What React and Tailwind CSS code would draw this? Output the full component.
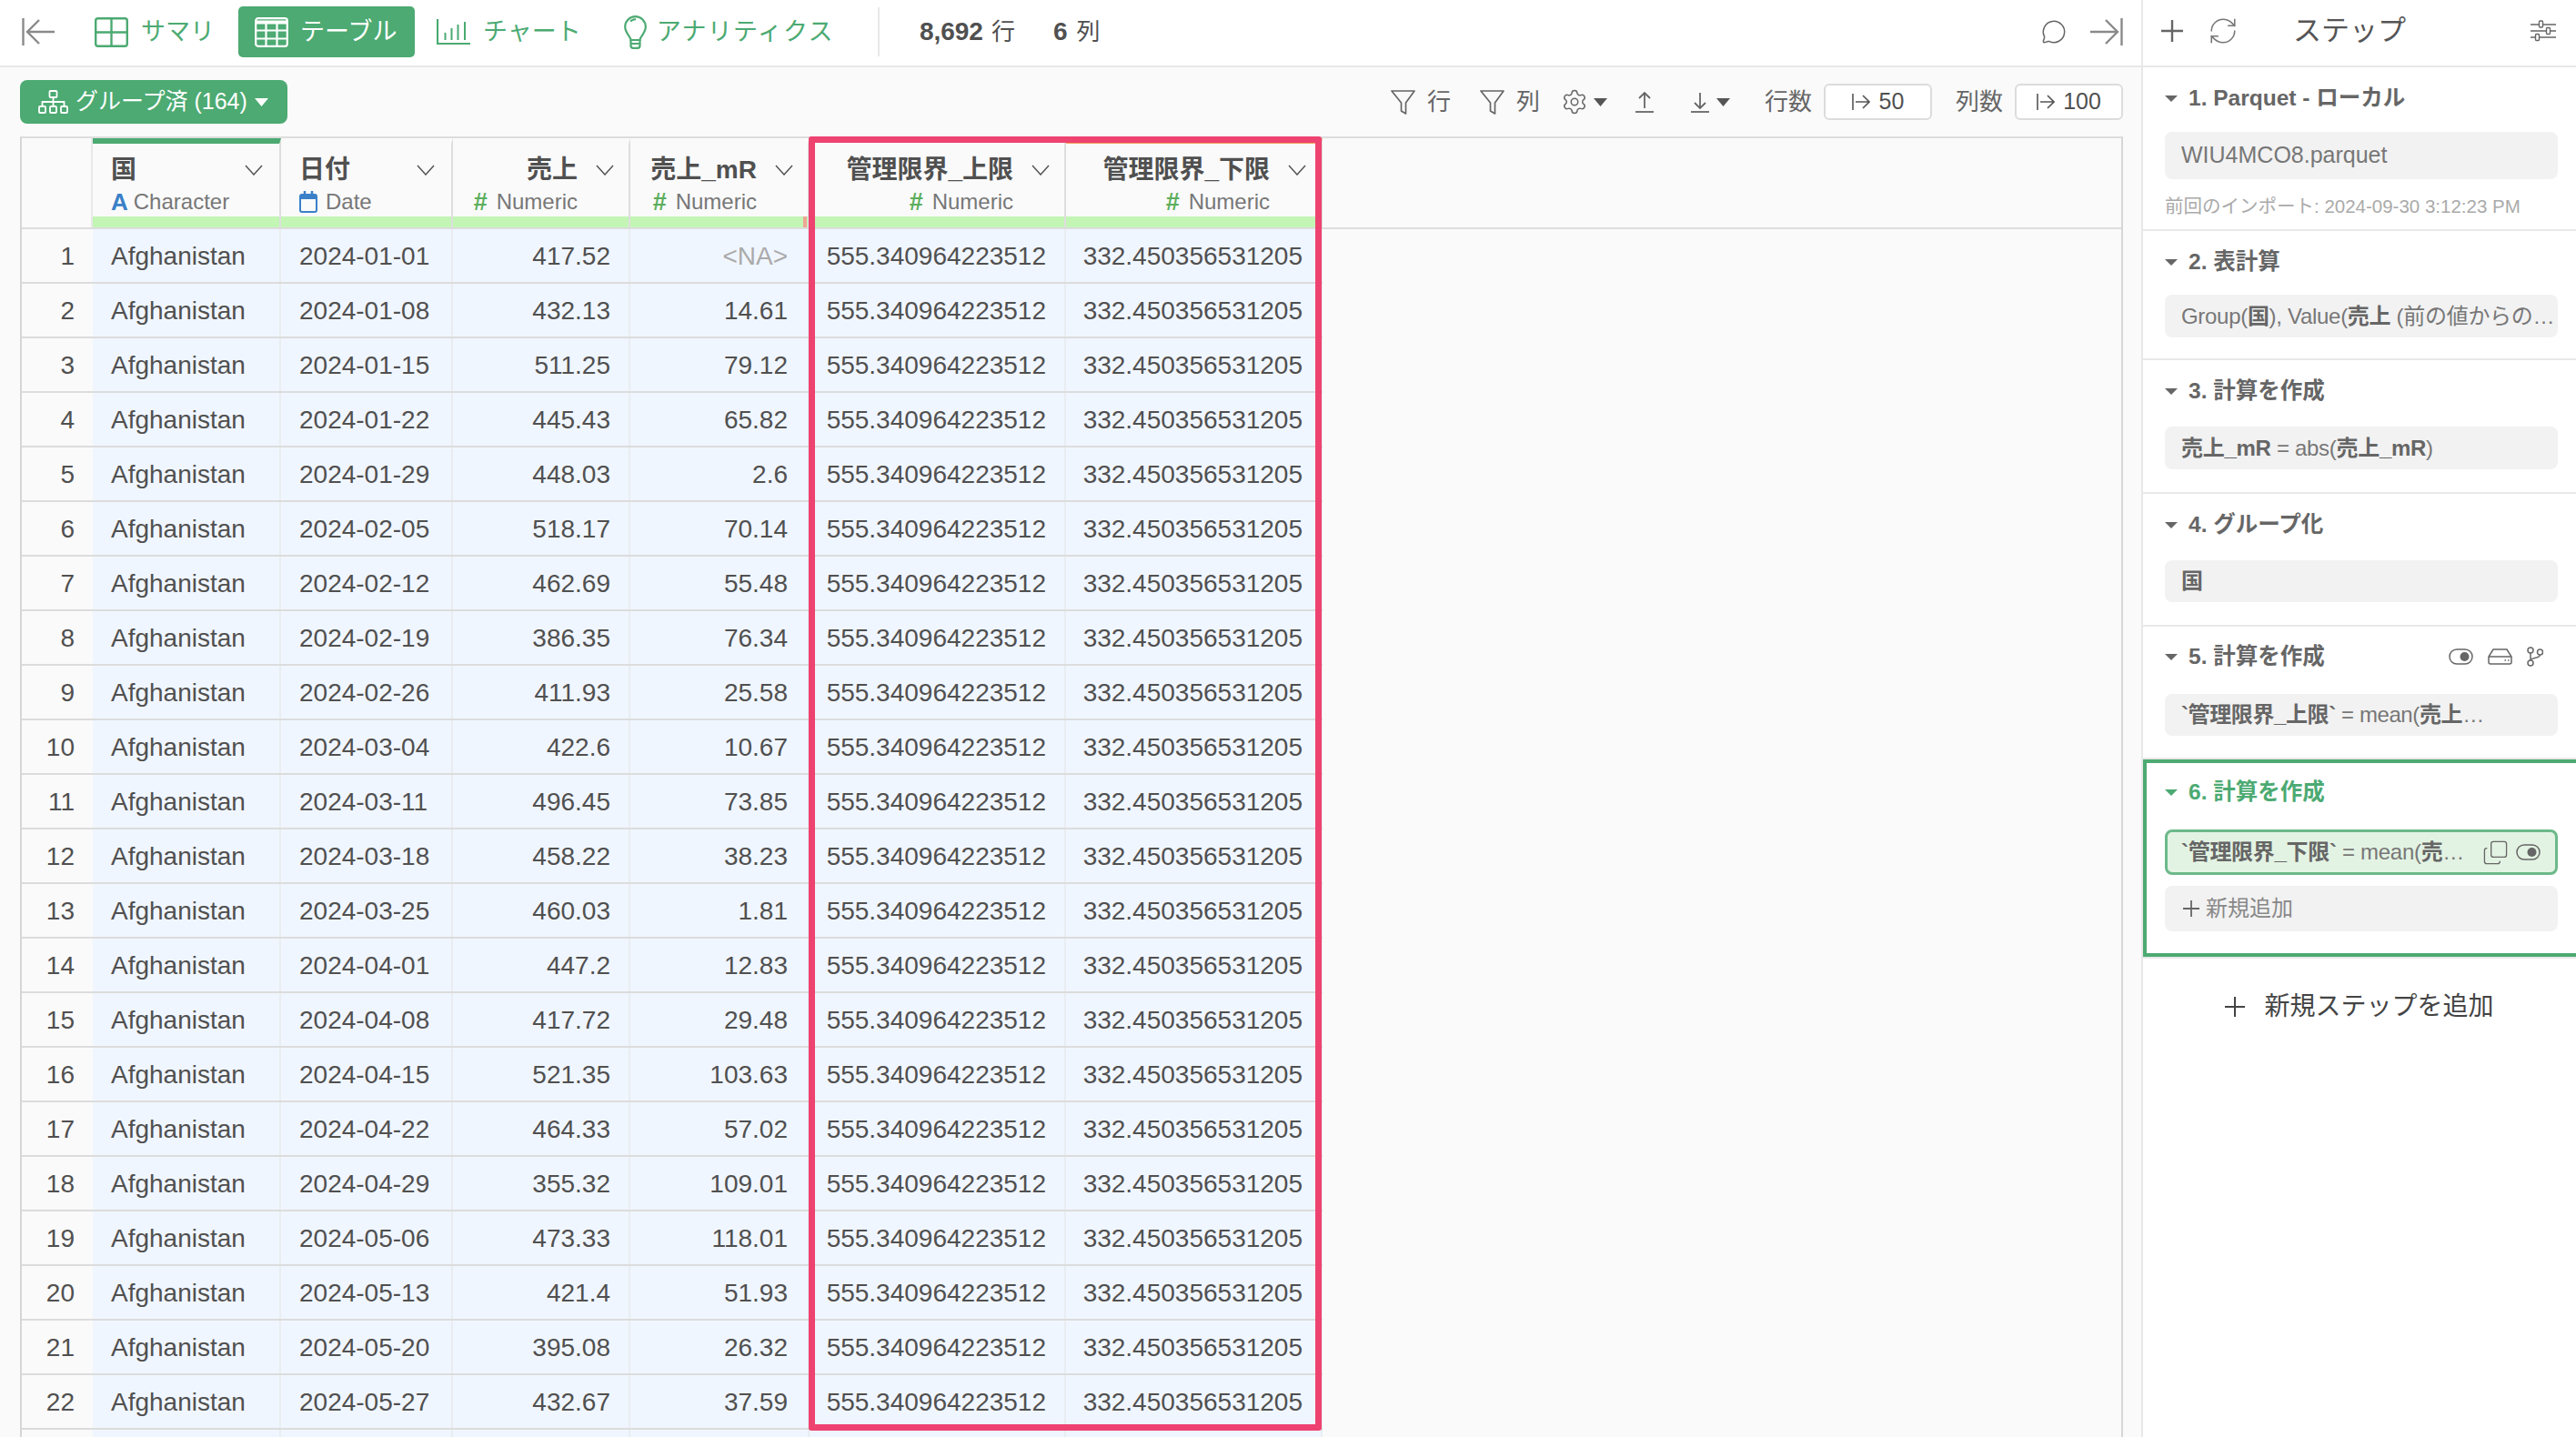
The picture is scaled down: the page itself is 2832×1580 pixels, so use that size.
import { Settings, MessageCircle, RefreshCw, Copy } from 'lucide-react';

const COLS = 'grid grid-cols-[78px_207px_189px_195px_197px_282px_282px] w-[1430px]';

const rows = [
  ['2024-01-01', '417.52', '<NA>'],
  ['2024-01-08', '432.13', '14.61'],
  ['2024-01-15', '511.25', '79.12'],
  ['2024-01-22', '445.43', '65.82'],
  ['2024-01-29', '448.03', '2.6'],
  ['2024-02-05', '518.17', '70.14'],
  ['2024-02-12', '462.69', '55.48'],
  ['2024-02-19', '386.35', '76.34'],
  ['2024-02-26', '411.93', '25.58'],
  ['2024-03-04', '422.6', '10.67'],
  ['2024-03-11', '496.45', '73.85'],
  ['2024-03-18', '458.22', '38.23'],
  ['2024-03-25', '460.03', '1.81'],
  ['2024-04-01', '447.2', '12.83'],
  ['2024-04-08', '417.72', '29.48'],
  ['2024-04-15', '521.35', '103.63'],
  ['2024-04-22', '464.33', '57.02'],
  ['2024-04-29', '355.32', '109.01'],
  ['2024-05-06', '473.33', '118.01'],
  ['2024-05-13', '421.4', '51.93'],
  ['2024-05-20', '395.08', '26.32'],
  ['2024-05-27', '432.67', '37.59'],
];

function EdgeArrow({ className }) {
  return (
    <svg width="36" height="30" viewBox="0 0 36 30" fill="none" stroke="#8a8a8a" strokeWidth="2.4" className={className}>
      <path d="M1.5 0v30" />
      <path d="M6 15h30M19 2 6 15l13 13" />
    </svg>
  );
}

function SummaryIcon() {
  return (
    <svg width="37" height="33" viewBox="0 0 37 33" fill="none" stroke="#4caa72" strokeWidth="2.4">
      <rect x="1.2" y="1.2" width="34.6" height="30.6" rx="2.5" />
      <path d="M18.5 1v31M1 16.5h35" />
    </svg>
  );
}

function TableIcon() {
  return (
    <svg width="37" height="33" viewBox="0 0 37 33" fill="none" stroke="#fff" strokeWidth="2.2">
      <rect x="1.2" y="1.2" width="34.6" height="30.6" rx="2.5" />
      <path d="M1 5.5h35" strokeWidth="4" />
      <path d="M12.5 5v27M24.5 5v27M1 14.5h35M1 23.5h35" />
    </svg>
  );
}

function ChartIcon() {
  return (
    <svg width="37" height="28" viewBox="0 0 37 28" fill="none" stroke="#4caa72">
      <path d="M1 0v27h36" strokeWidth="2.2" />
      <path d="M9.5 23v-8M16.5 23V10M23.5 23V6M31 23V3" strokeWidth="2" />
    </svg>
  );
}

function BulbIcon() {
  return (
    <svg width="25" height="37" viewBox="0 0 25 37" fill="none" stroke="#4caa72" strokeWidth="2.2">
      <path d="M7.5 27c0-4-6.3-7.500-6.300-14.500a11.300 11.300 0 0 1 22.600 0C23.800 19.500 17.500 23 17.500 27z" />
      <path d="M7 6.500c1.500-1.500 3.500-2.300 6-2.300" />
      <path d="M7.500 27v6c0 1.500 1 2.800 2.500 2.800h5c1.500 0 2.500-1.300 2.500-2.800v-6M7.500 31h10" />
    </svg>
  );
}

function OrgIcon() {
  return (
    <svg width="33" height="26" viewBox="0 0 33 26" fill="none" stroke="#fff" strokeWidth="1.8">
      <rect x="12.500" y="1" width="8" height="7" rx="1" />
      <path d="M16.500 8v5M4.500 18v-5h24v5M16.500 13v5" />
      <rect x="1" y="18" width="7" height="7" rx="1" />
      <rect x="13" y="18" width="7" height="7" rx="1" />
      <rect x="25" y="18" width="7" height="7" rx="1" />
    </svg>
  );
}

function Caret({ color = '#555', w = 15, h = 9 }) {
  return (
    <svg width={w} height={h} viewBox="0 0 15 9" preserveAspectRatio="none" className="shrink-0">
      <path d="M0 0h15L7.500 9z" fill={color} />
    </svg>
  );
}

function FilterIcon() {
  return (
    <svg width="27" height="27" viewBox="0 0 27 27" fill="none" stroke="#666" strokeWidth="1.7" strokeLinejoin="round" className="shrink-0">
      <path d="M1 1h25L16.500 14v12l-5-3V14z" />
    </svg>
  );
}

function UnderArrow({ down }) {
  return (
    <svg width="20" height="23" viewBox="0 0 20 23" fill="none" stroke="#666" strokeWidth="1.8" className="shrink-0">
      <path d={down ? 'M10 1v17M4 12l6 6 6-6' : 'M10 18V1M4 7l6-6 6 6'} />
      <path d="M0 22h20" />
    </svg>
  );
}

function LimitIcon() {
  return (
    <svg width="20" height="20" viewBox="0 0 20 20" fill="none" stroke="#555" strokeWidth="1.6" className="shrink-0">
      <path d="M1 1v18M4 10h15M12 3l7 7-7 7" />
    </svg>
  );
}

function Chevron() {
  return (
    <svg width="20" height="12" viewBox="0 0 20 12" fill="none" stroke="#555" strokeWidth="1.5" className="shrink-0">
      <path d="M1 1l9 10 9-10" />
    </svg>
  );
}

function ToggleIcon() {
  return (
    <svg width="27" height="18" viewBox="0 0 27 18" fill="none" className="shrink-0">
      <rect x="1" y="1" width="25" height="16" rx="8" stroke="#666" strokeWidth="1.5" />
      <circle cx="17.500" cy="9" r="5" fill="#666" />
    </svg>
  );
}

function DriveIcon() {
  return (
    <svg width="27" height="18" viewBox="0 0 27 18" fill="none" stroke="#666" strokeWidth="1.5" className="shrink-0">
      <path d="M6 1h15l5 8v6a2 2 0 0 1-2 2H3a2 2 0 0 1-2-2V9zM1 9h25" />
      <path d="M18.500 13h1.500M22 13h1.500" />
    </svg>
  );
}

function BranchIcon() {
  return (
    <svg width="18" height="22" viewBox="0 0 18 22" fill="none" stroke="#666" strokeWidth="1.5" className="shrink-0">
      <circle cx="4" cy="4" r="3" />
      <circle cx="4" cy="18" r="3" />
      <circle cx="14.500" cy="6" r="3" />
      <path d="M4 7v8M14.500 9c0 4-10.500 3-10.500 6" />
    </svg>
  );
}

function SlidersIcon() {
  return (
    <svg width="28" height="24" viewBox="0 0 28 24" fill="none" stroke="#666" strokeWidth="1.4" className="shrink-0">
      <path d="M0 5h9M14 5h14M0 12h17M22 12h6M0 19h5M10 19h18" />
      <rect x="9.500" y="1" width="4" height="7" rx="1" />
      <rect x="17.500" y="8.500" width="4" height="7" rx="1" />
      <rect x="5.500" y="15.500" width="4" height="7" rx="1" />
    </svg>
  );
}

function PlusIcon({ size, color = '#666', width = 2.4 }) {
  return (
    <svg width={size} height={size} viewBox="0 0 24 24" fill="none" stroke={color} strokeWidth={width} className="shrink-0">
      <path d="M12 0v24M0 12h24" />
    </svg>
  );
}

function HeaderCell({ name, type, icon, numeric, topBar = 'border-t-transparent', naMark }) {
  return (
    <div className={`flex flex-col h-[98px] border-t-[6px] border-r-2 border-r-[#dedede] bg-[#fafafa] ${topBar}`}>
      <div className="flex-1">
        <div className={`flex items-center h-[28px] mt-[15px] ${numeric ? 'justify-end pr-[16px]' : 'pl-[20px] pr-[18px] justify-between'}`}>
          <span className="text-[28px] font-semibold text-[#505050] whitespace-nowrap">{name}</span>
          <span className={numeric ? 'ml-[20px]' : ''}><Chevron /></span>
        </div>
        <div className={`flex items-center h-[26px] mt-[8px] ${numeric ? 'justify-end pr-[56px]' : 'pl-[20px]'}`}>
          {icon}
          <span className="text-[24px] text-[#777] whitespace-nowrap">{type}</span>
        </div>
      </div>
      <div className="flex h-[12px] bg-[#c3f5b5] justify-end">
        {naMark && <div className="w-[4px] mr-[1px] bg-[#f0a596]" />}
      </div>
    </div>
  );
}

const hashIcon = <span className="w-[19px] mr-[8px] text-center text-[27px] leading-[26px] font-bold text-[#5cae5c]">#</span>;

function Cell({ children, right, muted, pad = 'pr-[20px]' }) {
  return (
    <div className={`flex items-center pt-[2px] border-r-2 border-r-[#e9edf1] bg-[#f0f6ff] text-[28px] whitespace-nowrap ${right ? `justify-end ${pad}` : 'pl-[20px]'} ${muted ? 'text-[#aaa]' : 'text-[#505050]'}`}>
      {children}
    </div>
  );
}

function DataRow({ index, row }) {
  return (
    <div className={`${COLS} h-[60px] border-b-2 border-b-[#dcdcdc]`}>
      <div className="flex items-center justify-end pt-[2px] pr-[20px] bg-[#fafafa] text-[28px] text-[#505050]">{index}</div>
      <Cell>Afghanistan</Cell>
      <Cell>{row[0]}</Cell>
      <Cell right>{row[1]}</Cell>
      <Cell right pad="pr-[22px]" muted={row[2] === '<NA>'}>{row[2]}</Cell>
      <Cell right>555.340964223512</Cell>
      <Cell right>332.450356531205</Cell>
    </div>
  );
}

function StepTitle({ label, green, children }) {
  return (
    <div className="flex items-center h-[28px]">
      <Caret color={green ? '#4caa72' : '#666'} w={14} h={7} />
      <span className={`ml-[12px] text-[24.5px] font-bold whitespace-nowrap ${green ? 'text-[#4caa72]' : 'text-[#666]'}`}>{label}</span>
      {children}
    </div>
  );
}

function Field({ className, children }) {
  return (
    <div className={`flex items-center pl-[18px] rounded-[8px] bg-[#f2f2f2] text-[24px] text-[#777] whitespace-nowrap overflow-hidden ${className}`}>
      {children}
    </div>
  );
}

const B = ({ children }) => <span className="font-semibold text-[#666]">{children}</span>;

export default function App() {
  return (
    <div className="flex w-[2832px] h-[1580px] overflow-hidden bg-white font-['Liberation_Sans','Noto_Sans_CJK_JP',sans-serif]">
      <div className="flex flex-col w-[2354px] shrink-0">
        {/* top bar */}
        <div className="flex items-center h-[74px] pb-[6px] pt-[4px] border-b-2 border-b-[#e8e8e8] text-[27px] text-[#4caa72] whitespace-nowrap">
          <EdgeArrow className="ml-[24px] shrink-0" />
          <span className="ml-[44px]"><SummaryIcon /></span>
          <span className="ml-[14px]">サマリ</span>
          <div className="flex items-center ml-[26px] w-[194px] h-[56px] pl-[18px] rounded-[5px] bg-[#4caa72] text-white">
            <TableIcon />
            <span className="ml-[13px]">テーブル</span>
          </div>
          <span className="ml-[24px]"><ChartIcon /></span>
          <span className="ml-[14px]">チャート</span>
          <span className="ml-[47px]"><BulbIcon /></span>
          <span className="ml-[11px] tracking-[1.3px]">アナリティクス</span>
          <div className="ml-[48px] w-[2px] h-[54px] bg-[#e8e8e8]" />
          <span className="ml-[44px] text-[28px] font-bold text-[#505050]">8,692</span>
          <span className="ml-[9px] text-[26px] text-[#505050]">行</span>
          <span className="ml-[42px] text-[28px] font-bold text-[#505050]">6</span>
          <span className="ml-[10px] text-[26px] text-[#505050]">列</span>
          <MessageCircle size={28} strokeWidth={1.3} color="#666" className="ml-auto" />
          <EdgeArrow className="ml-[26px] mr-[20px] shrink-0 -scale-x-100" />
        </div>

        <div className="flex flex-col flex-1 min-h-0 bg-[#fafafa]">
          {/* toolbar */}
          <div className="flex items-center h-[48px] mt-[14px] ml-[22px] mr-[20px] text-[26px] text-[#666] whitespace-nowrap">
            <div className="flex items-center w-[294px] h-[48px] pl-[20px] rounded-[8px] bg-[#4caa72] text-white">
              <OrgIcon />
              <span className="ml-[8px] text-[25px]">グループ済 (164)</span>
              <span className="ml-[8px]"><Caret color="#fff" w={15} h={9} /></span>
            </div>
            <span className="ml-auto"><FilterIcon /></span>
            <span className="ml-[13px]">行</span>
            <span className="ml-[32px]"><FilterIcon /></span>
            <span className="ml-[13px]">列</span>
            <Settings size={30} strokeWidth={1.2} color="#666" className="ml-[23px]" />
            <span className="ml-[6px]"><Caret /></span>
            <span className="ml-[31px]"><UnderArrow /></span>
            <span className="ml-[41px]"><UnderArrow down /></span>
            <span className="ml-[8px]"><Caret /></span>
            <span className="ml-[38px]">行数</span>
            <div className="flex items-center justify-center gap-[10px] ml-[13px] w-[119px] h-[40px] border-2 border-[#dcdcdc] rounded-[6px] bg-white text-[25px] text-[#505050]">
              <LimitIcon />
              <span>50</span>
            </div>
            <span className="ml-[26px]">列数</span>
            <div className="flex items-center justify-center gap-[9px] ml-[13px] w-[119px] h-[40px] border-2 border-[#dcdcdc] rounded-[6px] bg-white text-[25px] text-[#505050]">
              <LimitIcon />
              <span>100</span>
            </div>
          </div>

          {/* table */}
          <div className="relative flex-1 min-h-0 mt-[14px] ml-[22px] mr-[20px] border-t-2 border-t-[#dddddd] border-l-2 border-l-[#d6d6d6] border-r-2 border-r-[#d6d6d6]">
            <div className="border-b-2 border-b-[#dddddd]">
              <div className={COLS}>
                <div className="border-r-2 border-r-[#e8e8e8] bg-[#fafafa]" />
                <HeaderCell
                  name="国"
                  type="Character"
                  topBar="border-t-[#4caa72]"
                  icon={<span className="mr-[6px] text-[26px] leading-[26px] font-bold text-[#3a80c8]">A</span>}
                />
                <HeaderCell
                  name="日付"
                  type="Date"
                  icon={
                    <svg width="20" height="24" viewBox="0 0 20 24" fill="none" className="mr-[9px] shrink-0">
                      <rect x="1" y="4" width="18" height="19" rx="2" stroke="#3a80c8" strokeWidth="2" />
                      <path d="M1 6a2 2 0 0 1 2-2h14a2 2 0 0 1 2 2v3H1z" fill="#3a80c8" />
                      <path d="M6 0v4M14 0v4" stroke="#3a80c8" strokeWidth="2.500" />
                    </svg>
                  }
                />
                <HeaderCell name="売上" type="Numeric" numeric icon={hashIcon} />
                <HeaderCell name="売上_mR" type="Numeric" numeric icon={hashIcon} naMark />
                <HeaderCell name="管理限界_上限" type="Numeric" numeric icon={hashIcon} />
                <HeaderCell name="管理限界_下限" type="Numeric" numeric icon={hashIcon} topBar="border-t-[#f2a35c]" />
              </div>
            </div>
            {rows.map((row, i) => (
              <DataRow key={row[0]} index={i + 1} row={row} />
            ))}
            <div className={`${COLS} h-[60px]`}>
              <div className="bg-[#fafafa]" />
              <Cell />
              <Cell />
              <Cell />
              <Cell />
              <Cell />
              <Cell />
            </div>
            {/* highlight over the two new columns */}
            <div className="absolute left-[865px] top-[-2px] w-[564px] h-[1423px] border-[7px] border-[#ee4270] rounded-[3px]" />
          </div>
        </div>
      </div>

      {/* steps panel */}
      <div className="flex flex-col w-[478px] shrink-0 border-l-2 border-l-[#e8e8e8]">
        <div className="flex items-center h-[74px] pb-[4px] pl-[20px] border-b-2 border-b-[#e8e8e8]">
          <PlusIcon size={24} />
          <RefreshCw size={34} strokeWidth={1.1} color="#777" className="ml-[27px]" />
          <span className="ml-[60px] text-[31px] text-[#555]">ステップ</span>
          <span className="ml-auto mr-[22px]"><SlidersIcon /></span>
        </div>

        <div className="pt-[20px] pb-[12px] pl-[24px] pr-[20px] border-b-2 border-b-[#e8e8e8]">
          <StepTitle label="1. Parquet - ローカル" />
          <Field className="h-[52px] mt-[23px]"><span className="text-[25px]">WIU4MCO8.parquet</span></Field>
          <div className="h-[26px] mt-[17px] text-[20.5px] leading-[26px] text-[#aaa] whitespace-nowrap">前回のインポート: 2024-09-30 3:12:23 PM</div>
        </div>

        <div className="pt-[20px] pb-[23px] pl-[24px] pr-[20px] border-b-2 border-b-[#e8e8e8]">
          <StepTitle label="2. 表計算" />
          <Field className="h-[47px] mt-[22px]">
            <span className="tracking-[-0.3px]">Group(<B>国</B>), Value(<B>売上</B> (前の値からの…</span>
          </Field>
        </div>

        <div className="pt-[20px] pb-[25px] pl-[24px] pr-[20px] border-b-2 border-b-[#e8e8e8]">
          <StepTitle label="3. 計算を作成" />
          <Field className="h-[47px] mt-[25px]">
            <span className="tracking-[-0.3px]"><B>売上_mR</B> = abs(<B>売上_mR</B>)</span>
          </Field>
        </div>

        <div className="pt-[20px] pb-[25px] pl-[24px] pr-[20px] border-b-2 border-b-[#e8e8e8]">
          <StepTitle label="4. グループ化" />
          <Field className="h-[46px] mt-[25px]"><B>国</B></Field>
        </div>

        <div className="pt-[19px] pb-[24px] pl-[24px] pr-[20px] border-b-2 border-b-[#e8e8e8]">
          <StepTitle label="5. 計算を作成">
            <span className="flex items-center gap-[16px] ml-auto mr-[16px]">
              <ToggleIcon />
              <DriveIcon />
              <BranchIcon />
            </span>
          </StepTitle>
          <Field className="h-[46px] mt-[27px]">
            <span className="tracking-[-0.4px]"><B>`管理限界_上限`</B> = mean(<B>売上</B>…</span>
          </Field>
        </div>

        <div className="border-b-2 border-b-[#e8e8e8]">
          <div className="pt-[18px] pb-[24px] pl-[20px] pr-[20px] border-4 border-r-0 border-[#4caa72]">
            <StepTitle label="6. 計算を作成" green />
            <div className="flex items-center h-[50px] mt-[27px] pl-[15px] border-[3px] border-[#6cb98a] rounded-[8px] bg-[#e3f3e3] text-[24px] text-[#777] whitespace-nowrap">
              <span className="tracking-[-0.3px]"><B>`管理限界_下限`</B> = mean(<B>売</B>…</span>
              <Copy size={29} strokeWidth={1.1} color="#666" className="ml-auto -scale-y-100" />
              <span className="ml-[8px] mr-[16px]"><ToggleIcon /></span>
            </div>
            <div className="flex items-center h-[50px] mt-[12px] pl-[20px] rounded-[8px] bg-[#f2f2f2] text-[24px] text-[#888]">
              <PlusIcon size={18} />
              <span className="ml-[7px]">新規追加</span>
            </div>
          </div>
        </div>

        <div className="flex items-center justify-center h-[40px] mt-[33px] text-[28px] text-[#444]">
          <PlusIcon size={22} color="#444" width={2.2} />
          <span className="ml-[21px]">新規ステップを追加</span>
        </div>
      </div>
    </div>
  );
}
